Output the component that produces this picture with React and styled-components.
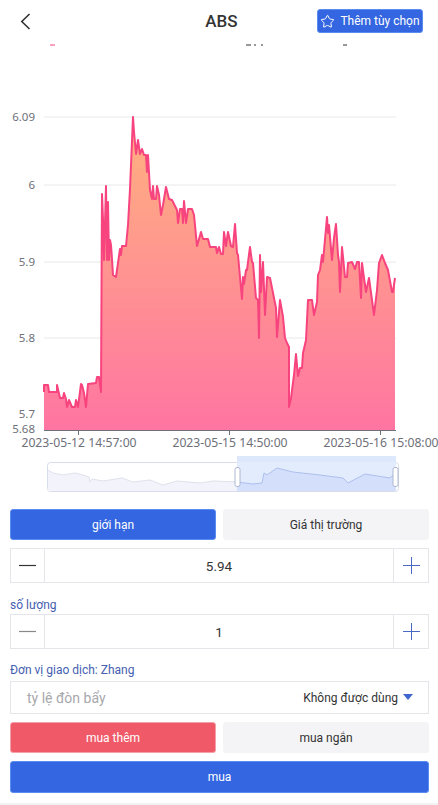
import styled, { createGlobalStyle } from 'styled-components';
import { Star } from 'lucide-react';

const GlobalStyle = createGlobalStyle`
  html, body {
    margin: 0;
    padding: 0;
    background: #fff;
    font-family: Roboto, "Noto Sans", sans-serif;
  }
  * {
    box-sizing: border-box;
  }
`;

const line = [
  [44, 392], [44, 385], [48, 385], [49, 392], [57, 392], [57, 385], [60, 398], [63, 398], [64, 393], [66, 399],
  [67, 407], [69, 400], [72, 407], [75, 407], [76, 400], [78, 407], [81, 384], [82, 385], [84, 393], [86, 407],
  [88, 384], [96, 383], [97, 377], [99, 377], [101, 392], [102, 194], [103, 219], [104, 260], [106, 186], [107, 260],
  [108, 202], [109, 260], [110, 240], [111, 245], [112, 259], [113, 275], [116, 277], [120, 249], [121, 255], [122, 246],
  [126, 246], [128, 225], [130, 189], [133, 117], [134, 132], [136, 154], [138, 140], [140, 154], [142, 149], [144, 155],
  [146, 155], [147, 172], [148, 155], [150, 190], [152, 199], [153, 186], [154, 199], [156, 199], [157, 186], [159, 195],
  [161, 215], [163, 205], [166, 187], [169, 199], [172, 200], [177, 210], [178, 223], [180, 209], [182, 209], [183, 223],
  [184, 201], [186, 223], [188, 209], [192, 209], [194, 215], [197, 246], [199, 239], [201, 232], [203, 239], [208, 239],
  [210, 247], [216, 247], [217, 253], [219, 247], [221, 254], [223, 254], [224, 232], [226, 246], [228, 232], [231, 246],
  [233, 247], [235, 224], [237, 253], [238, 255], [242, 299], [243, 277], [244, 284], [246, 270], [247, 270], [250, 247],
  [252, 262], [253, 263], [256, 298], [258, 300], [259, 338], [260, 255], [261, 292], [263, 262], [265, 315], [267, 277],
  [270, 278], [276, 308], [277, 337], [280, 300], [283, 317], [285, 338], [287, 343], [289, 347], [289, 407], [291, 398],
  [294, 375], [296, 354], [298, 376], [300, 368], [302, 368], [303, 353], [306, 340], [308, 300], [312, 300], [314, 315],
  [317, 302], [318, 275], [320, 270], [322, 255], [323, 262], [327, 217], [328, 233], [329, 225], [332, 260], [334, 238],
  [336, 224], [338, 255], [339, 262], [340, 292], [342, 247], [345, 277], [347, 277], [348, 263], [352, 262], [355, 269],
  [357, 262], [359, 262], [361, 298], [362, 263], [364, 278], [366, 292], [369, 278], [374, 315], [377, 290], [379, 263],
  [382, 255], [385, 263], [388, 270], [392, 292], [393, 292], [395, 278],
];

const miniLeft = [
  [48, 470], [53, 473], [63, 475], [75, 473], [83, 475], [89, 477], [90, 482], [92, 479], [103, 481], [122, 478],
  [133, 482], [150, 480], [163, 485], [177, 481], [200, 483], [213, 481], [237, 482],
];

const miniRight = [
  [237, 482], [253, 484], [262, 483], [264, 473], [267, 475], [277, 468], [293, 472], [320, 475], [343, 478], [348, 483],
  [365, 474], [390, 478], [395, 473],
];

const yTicks = [
  { label: '6.09', y: 117, grid: true },
  { label: '6', y: 185, grid: true },
  { label: '5.9', y: 262, grid: true },
  { label: '5.8', y: 338, grid: true },
  { label: '5.7', y: 414, grid: false },
  { label: '5.68', y: 429, grid: false },
];

const xTicks = [
  { label: '2023-05-12 14:57:00', x: 79 },
  { label: '2023-05-15 14:50:00', x: 230 },
  { label: '2023-05-16 15:08:00', x: 381 },
];

const toPoints = (pts) => pts.map((p) => p.join(',')).join(' ');

const Page = styled.div`
  width: 438px;
  height: 805px;
  overflow: hidden;
  background: #fff;
  border-bottom: 2px solid #f2f2f2;
`;

const Header = styled.header`
  height: 44px;
  display: grid;
  grid-template-columns: 1fr auto 1fr;
  align-items: center;
  padding: 0 15px 2px 20px;
`;

const BackButton = styled.span`
  display: flex;
  align-items: center;
  color: #333;
`;

const Title = styled.h1`
  margin: 0;
  font-size: 17px;
  font-weight: 500;
  color: #333;
`;

const FavButton = styled.button`
  justify-self: end;
  width: 106px;
  height: 24px;
  display: flex;
  align-items: center;
  justify-content: center;
  gap: 5px;
  padding: 0;
  border: 1px solid #5b8cf0;
  border-radius: 3px;
  background: #3366e0;
  color: #fff;
  font: 400 12px Roboto, sans-serif;
  white-space: nowrap;
`;

const Chart = styled.svg`
  display: block;
  width: 438px;
  height: 456px;
`;

const AxisText = styled.text`
  font: 400 ${(p) => p.$size}px "Noto Sans", sans-serif;
  fill: #6e7079;
`;

const Form = styled.section`
  display: flex;
  flex-direction: column;
  padding: 9px 9px 0 10px;
`;

const ButtonRow = styled.div`
  display: grid;
  grid-template-columns: 1fr 1fr;
  gap: 7px;
`;

const tones = {
  blue: 'background: #3366e0; color: #fff; border-color: #5b8cf0;',
  red: 'background: #f05a68; color: #fff; border-color: #f4a0a8;',
  grey: 'background: #f4f4f6; color: #333; border-color: #f4f4f6;',
};

const ActionButton = styled.button`
  width: 100%;
  height: ${(p) => p.$height || 31}px;
  padding: 0;
  border: 1px solid;
  border-radius: 3px;
  font: 400 12px Roboto, sans-serif;
  ${(p) => tones[p.$tone]}
`;

const Stepper = styled.div`
  display: grid;
  grid-template-columns: 34px 1fr 35px;
  height: 35px;
  margin-top: ${(p) => p.$top || 0}px;
  border: 1px solid #e6e6ea;
`;

const StepButton = styled.span`
  display: flex;
  align-items: center;
  justify-content: center;
  ${(p) => (p.$side === 'left' ? 'border-right' : 'border-left')}: 1px solid #e6e6ea;
`;

const StepValue = styled.span`
  display: flex;
  align-items: center;
  justify-content: center;
  font-size: 13.5px;
  color: #333;
`;

const FieldLabel = styled.label`
  height: 18px;
  margin-top: ${(p) => p.$top}px;
  line-height: 18px;
  font-size: 12px;
  color: #4560b0;
`;

const LeverageField = styled.div`
  height: 33px;
  margin-top: 2px;
  display: flex;
  align-items: center;
  justify-content: space-between;
  padding: 0 15px 0 16px;
  border: 1px solid #e6e6ea;
`;

const Placeholder = styled.span`
  font-size: 14px;
  color: #a8a8ac;
`;

const LeverageValue = styled.span`
  display: flex;
  align-items: center;
  gap: 5px;
  font-size: 12px;
  color: #333;
`;

const Caret = styled.i`
  width: 0;
  height: 0;
  margin-bottom: 2px;
  border-left: 5px solid transparent;
  border-right: 5px solid transparent;
  border-top: 6px solid #3f66cf;
`;

const Stack = styled.div`
  margin-top: 8px;
`;

const ChevronLeft = () => (
  <svg width="11" height="17" viewBox="0 0 11 17" fill="none" stroke="#333" strokeWidth="1.6">
    <path d="M9.5 1 L1.8 8.5 L9.5 16" />
  </svg>
);

const MinusIcon = ({ color }) => (
  <svg width="17" height="17" viewBox="0 0 17 17" stroke={color} strokeWidth="1.2">
    <path d="M0 8.5 H17" />
  </svg>
);

const PlusIcon = () => (
  <svg width="17" height="17" viewBox="0 0 17 17" stroke="#4a68c4" strokeWidth="1">
    <path d="M0 8.5 H17 M8.5 0 V17" />
  </svg>
);

const PriceChart = () => (
  <Chart viewBox="0 44 438 456">
    <defs>
      <linearGradient id="area" x1="0" y1="117" x2="0" y2="430" gradientUnits="userSpaceOnUse">
        <stop offset="0" stopColor="#ffb27f" />
        <stop offset="1" stopColor="#ff75a2" />
      </linearGradient>
    </defs>

    {/* clipped tail of the legend above the plot */}
    <rect x="50" y="44.5" width="5" height="1" fill="#f7447f" />
    <rect x="246" y="44.5" width="5" height="1" fill="#333" />
    <rect x="254" y="44.5" width="2" height="1" fill="#333" />
    <rect x="261" y="44.5" width="2" height="1" fill="#333" />
    <rect x="343" y="44.5" width="4" height="1" fill="#333" />

    {yTicks.map((t) => (
      <g key={t.label}>
        {t.grid && <line x1="44" x2="396" y1={t.y} y2={t.y} stroke="#e8e8ea" />}
        <AxisText $size={11.5} x="35" y={t.y + 4} textAnchor="end">{t.label}</AxisText>
      </g>
    ))}

    <polygon points={`44,430 ${toPoints(line)} 395,430`} fill="url(#area)" />
    <polyline points={toPoints(line)} fill="none" stroke="#f7447f" strokeWidth="2" strokeLinejoin="round" />

    <line x1="44" x2="396" y1="430.5" y2="430.5" stroke="#6e7079" />
    {xTicks.map((t) => (
      <g key={t.label}>
        <line x1={t.x - 0.5} x2={t.x - 0.5} y1="430" y2="435" stroke="#6e7079" />
        <AxisText $size={12.2} x={t.x} y="447" textAnchor="middle">{t.label}</AxisText>
      </g>
    ))}

    {/* data zoom */}
    <rect x="47.5" y="462.5" width="351" height="29" rx="3" fill="#fff" stroke="#d8dcea" />
    <polygon points={`48,491 ${toPoints(miniLeft)} 237,491`} fill="#f3f4fb" />
    <polyline points={toPoints(miniLeft)} fill="none" stroke="#dfe1ec" />
    <rect x="237" y="456" width="159" height="6" fill="#dde8fc" />
    <rect x="237" y="462" width="159" height="29" fill="#e2ecfd" />
    <polygon points={`237,491 ${toPoints(miniRight)} 396,491`} fill="#d3dffb" />
    <polyline points={toPoints(miniRight)} fill="none" stroke="#aebfee" />
    <rect x="235" y="467.5" width="5" height="19" rx="2" fill="#fff" stroke="#acb8d1" />
    <rect x="393" y="467.5" width="5" height="19" rx="2" fill="#fff" stroke="#acb8d1" />
  </Chart>
);

const App = () => (
  <Page>
    <GlobalStyle />
    <Header>
      <BackButton><ChevronLeft /></BackButton>
      <Title>ABS</Title>
      <FavButton>
        <Star size={15} strokeWidth={1.6} />
        Thêm tùy chọn
      </FavButton>
    </Header>

    <PriceChart />

    <Form>
      <ButtonRow>
        <ActionButton $tone="blue">giới hạn</ActionButton>
        <ActionButton $tone="grey">Giá thị trường</ActionButton>
      </ButtonRow>
      <Stepper $top={8}>
        <StepButton $side="left"><MinusIcon color="#333" /></StepButton>
        <StepValue>5.94</StepValue>
        <StepButton $side="right"><PlusIcon /></StepButton>
      </Stepper>

      <FieldLabel $top={13}>số lượng</FieldLabel>
      <Stepper>
        <StepButton $side="left"><MinusIcon color="#888" /></StepButton>
        <StepValue>1</StepValue>
        <StepButton $side="right"><PlusIcon /></StepButton>
      </Stepper>

      <FieldLabel $top={12}>Đơn vị giao dịch: Zhang</FieldLabel>
      <LeverageField>
        <Placeholder>tỷ lệ đòn bẩy</Placeholder>
        <LeverageValue>Không được dùng<Caret /></LeverageValue>
      </LeverageField>

      <Stack>
        <ButtonRow>
          <ActionButton $tone="red">mua thêm</ActionButton>
          <ActionButton $tone="grey">mua ngắn</ActionButton>
        </ButtonRow>
      </Stack>
      <Stack>
        <ActionButton $tone="blue" $height={32}>mua</ActionButton>
      </Stack>
    </Form>
  </Page>
);

export default App;
